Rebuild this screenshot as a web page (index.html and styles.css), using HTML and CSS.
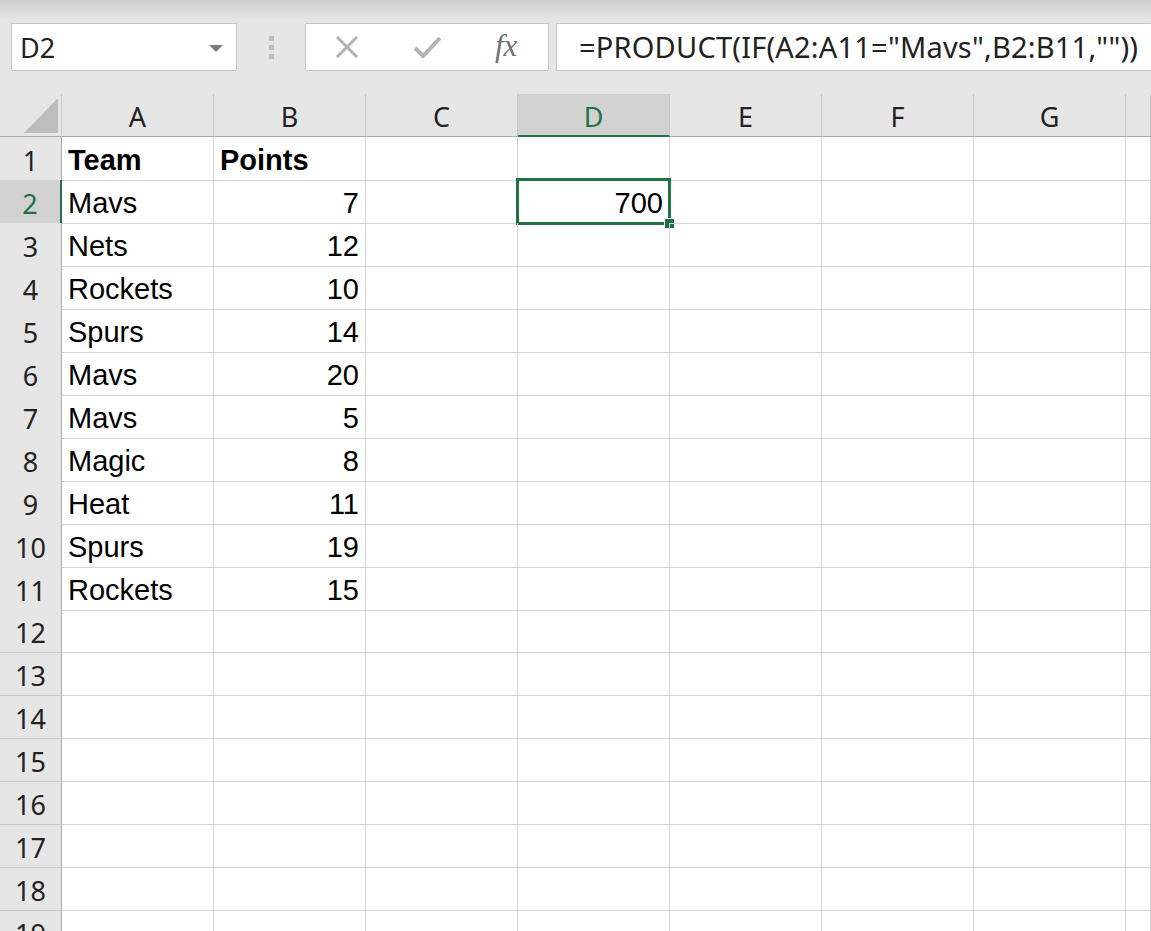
FILE: index.html
```html
<!DOCTYPE html>
<html lang="en">
<head>
    <meta charset="UTF-8">
    <title>Book1 - Excel</title>
    <link rel="stylesheet" href="styles.css">
</head>
<body>
    <!-- Formula bar -->
    <div class="toolbar">
        <div class="namebox">
            <span>D2</span>
            <svg class="caret" width="14" height="8" viewBox="0 0 14 8"><path d="M0 0h14L7 7z" fill="#7a7a7a"/></svg>
        </div>
        <div class="grip"><i></i><i></i><i></i></div>
        <div class="fxbox">
            <svg class="btn" width="24" height="22" viewBox="0 0 24 22"><path d="M2 1l20 20M22 1L2 21" stroke="#b3b3b3" stroke-width="3" fill="none"/></svg>
            <svg class="btn" width="27" height="22" viewBox="0 0 27 22"><path d="M1 12l8 8L26 2" stroke="#b3b3b3" stroke-width="4" fill="none"/></svg>
            <span class="fx">fx</span>
        </div>
        <div class="formula">=PRODUCT(IF(A2:A11="Mavs",B2:B11,""))</div>
    </div>

    <!-- Sheet -->
    <div class="sheet">
        <div class="row head">
            <div class="corner"><svg width="61" height="41" viewBox="0 0 61 41"><path d="M24 39H58V4z" fill="#bdbdbd"/></svg></div>
            <div class="col">A</div><div class="col">B</div><div class="col">C</div><div class="col active">D</div><div class="col">E</div><div class="col">F</div><div class="col">G</div><div class="col"></div>
        </div>
        <div class="row">
            <div class="num">1</div>
            <div class="cell bold">Team</div><div class="cell bold">Points</div><div class="cell"></div><div class="cell"></div><div class="cell"></div><div class="cell"></div><div class="cell"></div><div class="cell"></div>
        </div>
        <div class="row">
            <div class="num active">2</div>
            <div class="cell">Mavs</div><div class="cell right">7</div><div class="cell"></div>
            <div class="cell right selected">700<div class="selection"><span class="handle"></span></div></div>
            <div class="cell"></div><div class="cell"></div><div class="cell"></div><div class="cell"></div>
        </div>
        <div class="row">
            <div class="num">3</div>
            <div class="cell">Nets</div><div class="cell right">12</div><div class="cell"></div><div class="cell"></div><div class="cell"></div><div class="cell"></div><div class="cell"></div><div class="cell"></div>
        </div>
        <div class="row">
            <div class="num">4</div>
            <div class="cell">Rockets</div><div class="cell right">10</div><div class="cell"></div><div class="cell"></div><div class="cell"></div><div class="cell"></div><div class="cell"></div><div class="cell"></div>
        </div>
        <div class="row">
            <div class="num">5</div>
            <div class="cell">Spurs</div><div class="cell right">14</div><div class="cell"></div><div class="cell"></div><div class="cell"></div><div class="cell"></div><div class="cell"></div><div class="cell"></div>
        </div>
        <div class="row">
            <div class="num">6</div>
            <div class="cell">Mavs</div><div class="cell right">20</div><div class="cell"></div><div class="cell"></div><div class="cell"></div><div class="cell"></div><div class="cell"></div><div class="cell"></div>
        </div>
        <div class="row">
            <div class="num">7</div>
            <div class="cell">Mavs</div><div class="cell right">5</div><div class="cell"></div><div class="cell"></div><div class="cell"></div><div class="cell"></div><div class="cell"></div><div class="cell"></div>
        </div>
        <div class="row">
            <div class="num">8</div>
            <div class="cell">Magic</div><div class="cell right">8</div><div class="cell"></div><div class="cell"></div><div class="cell"></div><div class="cell"></div><div class="cell"></div><div class="cell"></div>
        </div>
        <div class="row">
            <div class="num">9</div>
            <div class="cell">Heat</div><div class="cell right">11</div><div class="cell"></div><div class="cell"></div><div class="cell"></div><div class="cell"></div><div class="cell"></div><div class="cell"></div>
        </div>
        <div class="row">
            <div class="num">10</div>
            <div class="cell">Spurs</div><div class="cell right">19</div><div class="cell"></div><div class="cell"></div><div class="cell"></div><div class="cell"></div><div class="cell"></div><div class="cell"></div>
        </div>
        <div class="row">
            <div class="num">11</div>
            <div class="cell">Rockets</div><div class="cell right">15</div><div class="cell"></div><div class="cell"></div><div class="cell"></div><div class="cell"></div><div class="cell"></div><div class="cell"></div>
        </div>
        <div class="row">
            <div class="num">12</div>
            <div class="cell"></div><div class="cell"></div><div class="cell"></div><div class="cell"></div><div class="cell"></div><div class="cell"></div><div class="cell"></div><div class="cell"></div>
        </div>
        <div class="row">
            <div class="num">13</div>
            <div class="cell"></div><div class="cell"></div><div class="cell"></div><div class="cell"></div><div class="cell"></div><div class="cell"></div><div class="cell"></div><div class="cell"></div>
        </div>
        <div class="row">
            <div class="num">14</div>
            <div class="cell"></div><div class="cell"></div><div class="cell"></div><div class="cell"></div><div class="cell"></div><div class="cell"></div><div class="cell"></div><div class="cell"></div>
        </div>
        <div class="row">
            <div class="num">15</div>
            <div class="cell"></div><div class="cell"></div><div class="cell"></div><div class="cell"></div><div class="cell"></div><div class="cell"></div><div class="cell"></div><div class="cell"></div>
        </div>
        <div class="row">
            <div class="num">16</div>
            <div class="cell"></div><div class="cell"></div><div class="cell"></div><div class="cell"></div><div class="cell"></div><div class="cell"></div><div class="cell"></div><div class="cell"></div>
        </div>
        <div class="row">
            <div class="num">17</div>
            <div class="cell"></div><div class="cell"></div><div class="cell"></div><div class="cell"></div><div class="cell"></div><div class="cell"></div><div class="cell"></div><div class="cell"></div>
        </div>
        <div class="row">
            <div class="num">18</div>
            <div class="cell"></div><div class="cell"></div><div class="cell"></div><div class="cell"></div><div class="cell"></div><div class="cell"></div><div class="cell"></div><div class="cell"></div>
        </div>
        <div class="row">
            <div class="num">19</div>
            <div class="cell"></div><div class="cell"></div><div class="cell"></div><div class="cell"></div><div class="cell"></div><div class="cell"></div><div class="cell"></div><div class="cell"></div>
        </div>
    </div>
</body>
</html>
```

FILE: styles.css
```css
body {
    margin: 0;
    height: 931px;
    overflow: hidden;
    background-color: #e6e6e6;
    font-family: "Liberation Sans", Arial, sans-serif;
    color: #000;
}

/* formula bar */
.toolbar {
    display: flex;
    align-items: flex-start;
    height: 94px;
    padding-top: 23px;
    box-sizing: border-box;
    background: linear-gradient(to bottom, #cdcdcd 0, #e6e6e6 20px);
}

.namebox {
    display: flex;
    align-items: center;
    justify-content: space-between;
    width: 226px;
    height: 48px;
    margin-left: 11px;
    padding: 0 13px 0 8px;
    box-sizing: border-box;
    background-color: #fff;
    border: 1px solid #c6c6c6;
    font-family: "Noto Sans", sans-serif;
    font-size: 27px;
    color: #222;
}

.caret {
    margin-top: 3px;
}

.grip {
    display: flex;
    flex-direction: column;
    gap: 4px;
    width: 5px;
    margin: 13px 31px 0 32px;
}

.grip i {
    display: block;
    width: 5px;
    height: 5px;
    background-color: #bdbdbd;
}

.fxbox {
    display: flex;
    align-items: center;
    width: 244px;
    height: 48px;
    padding-left: 29px;
    box-sizing: border-box;
    background-color: #fff;
    border: 1px solid #c6c6c6;
}

.fxbox .btn + .btn {
    margin-left: 55px;
}

.fx {
    margin-left: 54px;
    margin-top: -2px;
    font-family: "Liberation Serif", serif;
    font-style: italic;
    font-size: 31px;
    color: #707070;
}

.formula {
    flex: 1;
    height: 48px;
    margin-left: 7px;
    padding-left: 22px;
    box-sizing: border-box;
    background-color: #fff;
    border: 1px solid #c6c6c6;
    border-right: none;
    font-family: "Noto Sans", sans-serif;
    font-size: 29px;
    letter-spacing: 0.2px;
    line-height: 46px;
    color: #222;
    white-space: nowrap;
}

/* grid */
.sheet {
    background-color: #fff;
}

.row {
    display: grid;
    grid-template-columns: 62px repeat(7, 152px) 1fr;
    height: 43px;
}

.row.head {
    height: 43px;
    background-color: #e6e6e6;
}

.corner {
    border-right: 1px solid #c8c8c8;
    border-bottom: 1px solid #ababab;
}

.corner svg {
    display: block;
}

.col {
    display: flex;
    justify-content: center;
    align-items: center;
    padding-top: 3px;
    box-sizing: border-box;
    border-right: 1px solid #c8c8c8;
    border-bottom: 1px solid #ababab;
    font-family: "Noto Sans", sans-serif;
    font-size: 27px;
    color: #222;
}

.col.active {
    background-color: #d2d2d2;
    color: #217346;
    border-bottom: 2px solid #217346;
}

.num {
    display: flex;
    justify-content: center;
    align-items: center;
    padding-top: 3px;
    box-sizing: border-box;
    background-color: #e6e6e6;
    border-right: 1px solid #ababab;
    border-bottom: 1px solid #c8c8c8;
    font-family: "Noto Sans", sans-serif;
    font-size: 27px;
    color: #222;
}

.num.active {
    background-color: #d2d2d2;
    color: #217346;
    border-right: 2px solid #217346;
}

.cell {
    position: relative;
    padding: 3px 6px 0 6px;
    box-sizing: border-box;
    border-right: 1px solid #d4d4d4;
    border-bottom: 1px solid #d4d4d4;
    font-size: 29px;
    line-height: 40px;
    white-space: nowrap;
}

.cell.bold {
    font-weight: bold;
}

.cell.right {
    text-align: right;
}

.selection {
    position: absolute;
    left: -2px;
    top: -2px;
    right: -2px;
    bottom: -2px;
    border: 3px solid #217346;
}

.handle {
    position: absolute;
    right: -7px;
    bottom: -7px;
    width: 9px;
    height: 9px;
    background-color: #217346;
    border: 1px solid #fff;
}
```
